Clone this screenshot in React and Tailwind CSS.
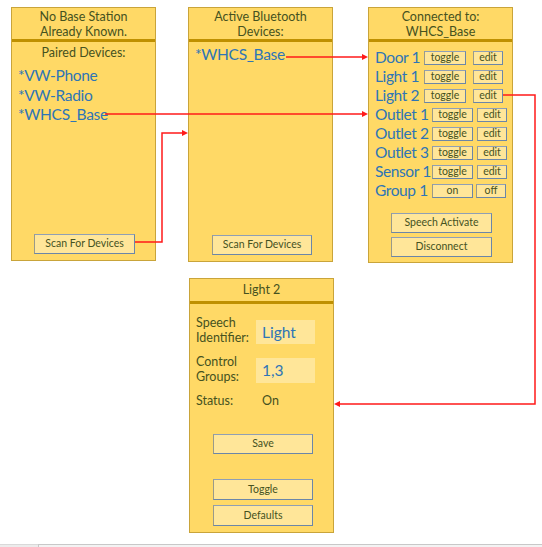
import React from 'react';

const ink = 'text-[#45521f]';

const Panel = ({ className = '', children }) => (
  <div className={`flex flex-col w-[145px] bg-[#ffd966] border border-[#c9a43a] ${className}`}>
    {children}
  </div>
);

const Header = ({ lines, className = '' }) => (
  <div className={`border-b-[3px] border-[#bf9000] text-center text-[12.5px] leading-[15px] ${ink} ${className}`}>
    {lines.map((l) => (
      <div key={l}>{l}</div>
    ))}
  </div>
);

const Btn = ({ children, className = '' }) => (
  <div
    className={`flex items-center justify-center bg-[#ffe699] border border-[#6b86a8] border-l-[#9a9a8a] border-t-[#8f9fb5] text-[10.5px] leading-none pb-[1px] ${ink} ${className}`}
  >
    {children}
  </div>
);

const Arrow = ({ x, y, dir }) => {
  const pts = dir === 'right'
    ? `${x},${y} ${x - 6},${y - 3} ${x - 6},${y + 3}`
    : `${x},${y} ${x + 6},${y - 3} ${x + 6},${y + 3}`;
  return <polygon points={pts} fill="#ff1a1a" />;
};

const DeviceRow = ({ name, a, b, short, gap }) => (
  <div className="flex items-center h-[19px]">
    <span className={`shrink-0 whitespace-nowrap text-[15.5px] tracking-[-0.4px] leading-[19px] text-[#2e75b6] ${short ? 'w-[49px]' : 'w-[57px]'}`}>
      {name}
    </span>
    <Btn className={`shrink-0 h-[14px] ${short ? 'w-[42px]' : 'w-[41px]'}`}>{a}</Btn>
    <Btn className={`shrink-0 h-[14px] w-[30px] ${gap}`}>{b}</Btn>
  </div>
);

const rows = [
  { name: 'Door 1', a: 'toggle', b: 'edit', gap: 'ml-[7px]', short: true },
  { name: 'Light 1', a: 'toggle', b: 'edit', gap: 'ml-[7px]', short: true },
  { name: 'Light 2', a: 'toggle', b: 'edit', gap: 'ml-[7px]', short: true },
  { name: 'Outlet 1', a: 'toggle', b: 'edit', gap: 'ml-[4px]' },
  { name: 'Outlet 2', a: 'toggle', b: 'edit', gap: 'ml-[4px]' },
  { name: 'Outlet 3', a: 'toggle', b: 'edit', gap: 'ml-[4px]' },
  { name: 'Sensor 1', a: 'toggle', b: 'edit', gap: 'ml-[4px]' },
  { name: 'Group 1', a: 'on', b: 'off', gap: 'ml-[3px]' },
];

export default function App() {
  return (
    <div className="relative w-[542px] h-[547px] bg-white overflow-hidden font-['Lato','Liberation_Sans',sans-serif]">
      <div className="flex items-start pt-[7px] pl-[11px]">
        {/* paired devices */}
        <Panel className="h-[254px]">
          <Header lines={['No Base Station', 'Already Known.']} className="h-[34px] pt-[1px]" />
          <div className={`text-center text-[12.5px] leading-[15px] mt-[3px] ${ink}`}>Paired Devices:</div>
          <div className="pl-[6px] mt-[6px] text-[15.5px] tracking-[-0.3px] leading-[19.5px] text-[#2e75b6]">
            <div>*VW-Phone</div>
            <div>*VW-Radio</div>
            <div>*WHCS_Base</div>
          </div>
          <Btn className="mt-auto mb-[6px] ml-[22px] w-[101px] h-[20px]">Scan For Devices</Btn>
        </Panel>

        {/* active bluetooth */}
        <Panel className="h-[255px] ml-[32px]">
          <Header lines={['Active Bluetooth', 'Devices:']} className="h-[34px] pt-[1px]" />
          <div className="pl-[6px] mt-[3px] text-[15.5px] tracking-[-0.3px] leading-[19.5px] text-[#2e75b6]">*WHCS_Base</div>
          <Btn className="mt-auto mb-[6px] ml-[23px] w-[100px] h-[20px]">Scan For Devices</Btn>
        </Panel>

        {/* connected */}
        <Panel className="h-[256px] ml-[35px]">
          <Header lines={['Connected to:', 'WHCS_Base']} className="h-[34px] pt-[1px]" />
          <div className="pl-[6px] pt-[6px] flex flex-col">
            {rows.map((r) => (
              <DeviceRow key={r.name} {...r} />
            ))}
          </div>
          <Btn className="mt-[13px] ml-[22px] w-[101px] h-[20px]">Speech Activate</Btn>
          <Btn className="mt-[4px] ml-[22px] w-[101px] h-[20px]">Disconnect</Btn>
        </Panel>
      </div>

      {/* device editor */}
      <div className="pl-[189px] mt-[15px]">
        <Panel className="h-[255px]">
          <Header lines={['Light 2']} className="h-[25px] pt-[3px]" />
          <div className={`pl-[6px] text-[12.5px] leading-[15px] ${ink}`}>
            <div className="flex items-center mt-[11px]">
              <div className="w-[60px]">Speech<br />Identifier:</div>
              <div className="w-[59px] h-[24px] mt-[3px] bg-[#ffe699] pl-[6px] text-[15.5px] leading-[24px] text-[#2e75b6]">Light</div>
            </div>
            <div className="flex items-center mt-[9px]">
              <div className="w-[60px]">Control<br />Groups:</div>
              <div className="w-[59px] h-[25px] mt-[3px] bg-[#ffe699] pl-[6px] text-[15.5px] leading-[25px] text-[#2e75b6]">1,3</div>
            </div>
            <div className="flex items-center mt-[9px]">
              <div className="w-[60px]">Status:</div>
              <div className="pl-[6px]">On</div>
            </div>
          </div>
          <Btn className="mt-[26px] ml-[23px] w-[100px] h-[20px]">Save</Btn>
          <Btn className="mt-[25px] ml-[23px] w-[100px] h-[21px]">Toggle</Btn>
          <Btn className="mt-[5px] ml-[23px] w-[100px] h-[21px]">Defaults</Btn>
        </Panel>
      </div>

      {/* bottom strip */}
      <div className="absolute left-0 right-0 top-[544px] h-[3px] flex">
        <div className="w-[38px] bg-[#ececec] border-t border-[#d9d9d9]" />
        <div className="flex-1 bg-[#f3f3f3] border-t border-l border-[#c8c8c8]" />
      </div>

      {/* connectors */}
      <svg className="absolute inset-0 pointer-events-none" width="542" height="547">
        <g fill="none" stroke="#ff1a1a" strokeWidth="1.5">
          <path d="M105 114 H363" />
          <path d="M286 57 H363" />
          <path d="M135 242 H162 V133 H183" />
          <path d="M503 95 H535 V404 H339" />
        </g>
        <Arrow x={368} y={114} dir="right" />
        <Arrow x={368} y={57} dir="right" />
        <Arrow x={188} y={133} dir="right" />
        <Arrow x={334} y={404} dir="left" />
      </svg>
    </div>
  );
}
